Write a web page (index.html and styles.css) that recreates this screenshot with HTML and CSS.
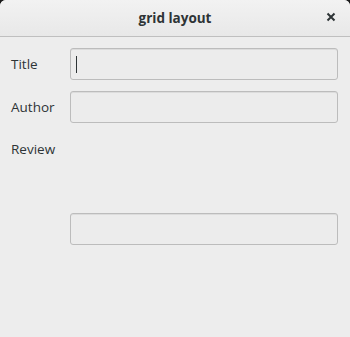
FILE: index.html
```html
<!DOCTYPE html>
<html lang="en">
<head>
    <meta charset="UTF-8">
    <title>grid layout</title>
    <link rel="stylesheet" href="styles.css">
</head>
<body>
    <div class="window">
        <div class="titlebar">
            <span class="title">grid layout</span>
            <svg class="close" width="10" height="10" viewBox="0 0 10 10">
                <path d="M1.5 1.5 L8.5 8.5 M8.5 1.5 L1.5 8.5" stroke="#2e3436" stroke-width="2" fill="none"/>
            </svg>
        </div>
        <div class="grid">
            <label class="label">Title</label>
            <div class="entry focused"><span class="caret"></span></div>
            <label class="label">Author</label>
            <div class="entry"></div>
            <label class="label label-top">Review</label>
            <div class="textview"></div>
            <div></div>
            <div class="entry"></div>
        </div>
    </div>
</body>
</html>
```

FILE: styles.css
```css
* {
    margin: 0;
    padding: 0;
    box-sizing: border-box;
}
html {
    background: #1a1a1a;
}
body {
    width: 350px;
    height: 337px;
    font-family: "Open Sans", "Noto Sans", sans-serif;
    color: #2e3436;
}
.window {
    height: 337px;
    background: #ededed;
    border-radius: 6px 6px 0 0;
    overflow: hidden;
}
.titlebar {
    height: 37px;
    display: flex;
    align-items: center;
    justify-content: center;
    position: relative;
    background: linear-gradient(#f2f2f2, #e8e8e8);
    border-bottom: 1px solid #bfbfbf;
}
.title {
    font-size: 13.5px;
    font-weight: bold;
    color: #2e3436;
}
.close {
    position: absolute;
    right: 14px;
    top: 12px;
}
.grid {
    display: grid;
    grid-template-columns: 60px 268px;
    grid-template-rows: 32px 32px 68px 32px;
    column-gap: 0;
    row-gap: 11px;
    padding: 11px 0 0 10px;
}
.label {
    display: flex;
    align-items: center;
    font-size: 13.5px;
    color: #2e3436;
    padding-left: 1px;
}
.label-top {
    align-items: flex-start;
    padding-top: 6px;
}
.entry {
    height: 32px;
    background: #ececec;
    border: 1px solid #bcbcbc;
    border-radius: 3px;
    box-shadow: inset 0 1px 0 #dcdcdc;
    display: flex;
    align-items: center;
    padding-left: 5px;
}
.caret {
    width: 1px;
    height: 17px;
    background: #2e3436;
}
```
